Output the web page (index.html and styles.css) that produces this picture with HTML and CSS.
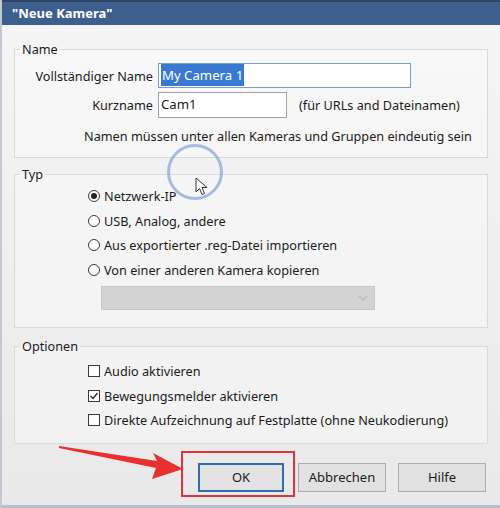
FILE: index.html
```html
<!DOCTYPE html>
<html lang="de">

<head>
    <meta charset="UTF-8">
    <meta name="viewport" content="width=device-width, initial-scale=1.0">
    <title>Neue Kamera</title>
    <link rel="stylesheet" href="styles.css">
</head>

<body>
<div class="window">
    <div class="titlebar">"Neue Kamera"</div>

    <div class="content">
        <fieldset class="group group-name">
            <legend>Name</legend>
            <div class="field-row">
                <label class="field-label">Vollständiger Name</label>
                <div class="textbox textbox-full"><span class="selected">My Camera 1</span></div>
            </div>
            <div class="field-row row-short">
                <label class="field-label">Kurzname</label>
                <div class="textbox textbox-short">Cam1</div>
                <span class="hint">(für URLs and Dateinamen)</span>
            </div>
            <p class="note">Namen müssen unter allen Kameras und Gruppen eindeutig sein</p>
        </fieldset>

        <fieldset class="group group-typ">
            <legend>Typ</legend>
            <div class="option"><span class="radio checked"></span>Netzwerk-IP</div>
            <div class="option"><span class="radio"></span>USB, Analog, andere</div>
            <div class="option"><span class="radio"></span>Aus exportierter .reg-Datei importieren</div>
            <div class="option"><span class="radio"></span>Von einer anderen Kamera kopieren</div>
            <div class="select-disabled">
                <svg width="10" height="6" viewBox="0 0 10 6"><path d="M1 1 L5 5 L9 1" fill="none" stroke="#b9b9b9" stroke-width="1.2"/></svg>
            </div>
        </fieldset>

        <fieldset class="group group-opt">
            <legend>Optionen</legend>
            <div class="option"><span class="checkbox"></span>Audio aktivieren</div>
            <div class="option"><span class="checkbox checked">
                <svg width="10" height="10" viewBox="0 0 10 10"><path d="M1.5 5 L4 7.5 L8.5 2" fill="none" stroke="#222" stroke-width="1.2"/></svg>
            </span>Bewegungsmelder aktivieren</div>
            <div class="option"><span class="checkbox"></span>Direkte Aufzeichnung auf Festplatte (ohne Neukodierung)</div>
        </fieldset>

        <div class="buttons">
            <button class="btn btn-ok">OK</button>
            <button class="btn btn-cancel">Abbrechen</button>
            <button class="btn btn-help">Hilfe</button>
        </div>
    </div>

    <!-- annotations from the tutorial video -->
    <div class="red-box"></div>
    <svg class="red-arrow" width="500" height="508" viewBox="0 0 500 508">
        <polygon points="59,446 157,461 153,453 183,469 152,479 156,468 59,448" fill="#e8302e"/>
    </svg>
    <div class="cursor-ring"></div>
    <svg class="cursor" width="14" height="20" viewBox="0 0 14 20">
        <path d="M1 1 L1 15 L4.5 11.5 L7 17.5 L9.5 16.5 L7 10.5 L12 10.5 Z" fill="#fff" stroke="#333" stroke-width="1"/>
    </svg>
</div>
</body>

</html>
```

FILE: styles.css
```css
body {
    margin: 0;
    font-family: "Noto Sans", "Open Sans", sans-serif;
    font-size: 12.7px;
    color: #1b1b1b;
}

.window {
    position: relative;
    width: 500px;
    height: 508px;
    overflow: hidden;
    background: linear-gradient(#f5f5f5, #e9e9e9);
    border-left: 2px solid #c3c9d1;
    border-bottom: 3px solid #b9c0ca;
    box-sizing: border-box;
}

.titlebar {
    height: 25px;
    box-sizing: border-box;
    border-top: 2px solid #2d4463;
    background-color: #3d5f8d;
    color: #ffffff;
    font-weight: bold;
    font-size: 13px;
    line-height: 22px;
    padding-left: 10px;
}

.content {
    padding: 0 12px 0 12px;
}

.group {
    margin: 0;
    border: 1px solid #dadada;
    background-color: rgba(255, 255, 255, 0.35);
    padding: 0;
}

.group legend {
    margin-left: 5px;
    padding: 0 2px;
    line-height: 17px;
}

.group-name {
    margin-top: 16px;
    padding: 5px 0 12px 0;
}

.field-row {
    display: flex;
    align-items: center;
}

.row-short {
    margin-top: 4px;
}

.field-label {
    width: 138px;
    text-align: right;
    margin-right: 5px;
}

.textbox {
    box-sizing: border-box;
    height: 25px;
    background-color: #ffffff;
    border: 1px solid #a2a2a2;
    padding: 0 2px;
    line-height: 23px;
    font-size: 13.2px;
}

.textbox-full {
    width: 253px;
    border-color: #7a9dc8;
}

.textbox-short {
    width: 129px;
    height: 26px;
}

.selected {
    background-color: #3a79d2;
    color: #ffffff;
    padding: 2px 1px;
}

.hint {
    margin-left: 12px;
}

.note {
    margin: 10px 0 0 69px;
    line-height: 17px;
    white-space: nowrap;
}

.group-typ {
    margin-top: 8px;
    padding: 1px 0 17px 0;
}

.option {
    display: flex;
    align-items: center;
    height: 24.5px;
    padding-left: 73px;
    white-space: nowrap;
}

.radio {
    box-sizing: border-box;
    width: 12px;
    height: 12px;
    border: 1px solid #3a3a3a;
    border-radius: 50%;
    background-color: #ffffff;
    margin-right: 4px;
    display: flex;
    align-items: center;
    justify-content: center;
}

.radio.checked::after {
    content: "";
    width: 6px;
    height: 6px;
    border-radius: 50%;
    background-color: #222;
}

.checkbox {
    box-sizing: border-box;
    width: 12px;
    height: 12px;
    border: 1px solid #3a3a3a;
    background-color: #ffffff;
    margin-right: 4px;
    display: flex;
    align-items: center;
    justify-content: center;
}

.select-disabled {
    box-sizing: border-box;
    margin: 4px 0 0 86px;
    width: 274px;
    height: 24px;
    background-color: #d3d3d3;
    border: 1px solid #c8c8c8;
    display: flex;
    align-items: center;
    justify-content: flex-end;
    padding-right: 6px;
}

.group-opt {
    margin-top: 10px;
    padding: 4px 0 10px 0;
}

.buttons {
    display: flex;
    margin-top: 19px;
    padding-left: 184px;
}

.btn {
    box-sizing: border-box;
    height: 29px;
    width: 88px;
    font-family: "Noto Sans", "Open Sans", sans-serif;
    font-size: 13px;
    color: #1b1b1b;
    background-color: #e1e1e1;
    border: 1px solid #adadad;
}

.btn-ok {
    width: 86px;
    background-color: #e3e3e3;
    border: 2px solid #2f6db3;
}

.btn-cancel {
    margin-left: 14px;
}

.btn-help {
    margin-left: 12px;
}

.red-box {
    position: absolute;
    left: 179px;
    top: 451px;
    width: 114px;
    height: 46px;
    box-sizing: border-box;
    border: 2px solid #e2323c;
}

.red-arrow {
    position: absolute;
    left: -2px;
    top: 0;
}

.cursor-ring {
    position: absolute;
    left: 165px;
    top: 144px;
    width: 56px;
    height: 56px;
    box-sizing: border-box;
    border: 3px solid rgba(140, 165, 215, 0.75);
    border-radius: 50%;
}

.cursor {
    position: absolute;
    left: 193px;
    top: 177px;
}
```
